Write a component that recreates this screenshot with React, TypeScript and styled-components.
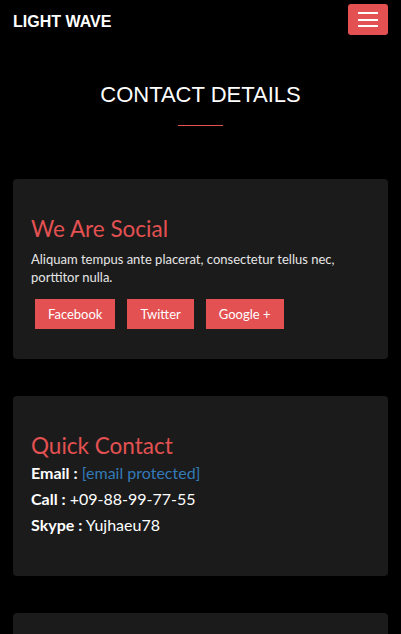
import styled, { createGlobalStyle } from 'styled-components';

const GlobalStyle = createGlobalStyle`
  html, body {
    margin: 0;
    padding: 0;
    background: #000;
  }
  body {
    font-family: Lato, 'Open Sans', sans-serif;
    color: #fff;
  }
  * {
    box-sizing: border-box;
  }
`;

const RED = '#e35152';

const NavBar = styled.header`
  height: 40px;
  padding: 4px 13px 0;
  display: flex;
  align-items: center;
  justify-content: space-between;
`;

const Brand = styled.div`
  font-family: 'Liberation Sans', Arial, sans-serif;
  font-weight: 700;
  font-size: 16px;
  color: #fff;
`;

const Toggle = styled.button`
  width: 40px;
  height: 31px;
  margin-top: -5px;
  border: none;
  border-radius: 3px;
  background: ${RED};
  display: flex;
  flex-direction: column;
  align-items: center;
  justify-content: center;
  gap: 4.5px;
  padding: 0;
`;

const Bar = styled.span`
  display: block;
  width: 20px;
  height: 2px;
  background: #fff;
`;

const SectionTitle = styled.h2`
  margin: 43px 0 0;
  text-align: center;
  font-family: 'Liberation Sans', Arial, sans-serif;
  font-weight: 400;
  font-size: 22px;
  line-height: 1.1;
  color: #fff;
`;

const Rule = styled.div`
  width: 45px;
  height: 1px;
  margin: 18px auto 0;
  background: ${RED};
`;

const Cards = styled.main`
  margin-top: 53px;
  padding: 0 13px;
  display: flex;
  flex-direction: column;
  gap: 37px;
`;

const Card = styled.section`
  background: #1b1b1b;
  border-radius: 4px;
  padding: 37px 18px 25px;
`;

const CardTitle = styled.h3<{ $gap: number }>`
  margin: 0 0 ${(p) => p.$gap}px;
  font-weight: 400;
  font-size: 22.5px;
  line-height: 25px;
  color: ${RED};
`;

const Text = styled.p`
  margin: 0 0 13px;
  font-size: 13px;
  line-height: 18px;
  color: #e6e6e6;
`;

const Socials = styled.div`
  display: flex;
  gap: 12px;
  margin: 0 4px 5px;
`;

const SocialButton = styled.a`
  display: inline-block;
  height: 30px;
  padding: 0 13px;
  line-height: 30px;
  font-size: 13px;
  background: ${RED};
  color: #fff;
  text-decoration: none;
`;

const InfoList = styled.div`
  margin-bottom: 13px;
`;

const InfoRow = styled.div`
  font-size: 16px;
  line-height: 26px;
  color: #fff;
`;

const Label = styled.b`
  font-weight: 700;
`;

const Link = styled.a`
  color: #337ab7;
  text-decoration: none;
`;

const App = () => {
  return (
    <>
      <GlobalStyle />
      <NavBar>
        <Brand>LIGHT WAVE</Brand>
        <Toggle aria-label="menu">
          <Bar />
          <Bar />
          <Bar />
        </Toggle>
      </NavBar>

      <SectionTitle>CONTACT DETAILS</SectionTitle>
      <Rule />

      <Cards>
        <Card>
          <CardTitle $gap={9}>We Are Social</CardTitle>
          <Text>
            Aliquam tempus ante placerat, consectetur tellus nec, porttitor
            nulla.
          </Text>
          <Socials>
            <SocialButton href="#">Facebook</SocialButton>
            <SocialButton href="#">Twitter</SocialButton>
            <SocialButton href="#">Google +</SocialButton>
          </Socials>
        </Card>

        <Card>
          <CardTitle $gap={2}>Quick Contact</CardTitle>
          <InfoList>
            <InfoRow>
              <Label>Email :</Label> <Link href="#">[email protected]</Link>
            </InfoRow>
            <InfoRow>
              <Label>Call :</Label> +09-88-99-77-55
            </InfoRow>
            <InfoRow>
              <Label>Skype :</Label> Yujhaeu78
            </InfoRow>
          </InfoList>
        </Card>

        <Card>
          <CardTitle $gap={9}>Our Address</CardTitle>
          <Text>
            Aliquam tempus ante placerat, consectetur tellus nec, porttitor
            nulla.
          </Text>
        </Card>
      </Cards>
    </>
  );
};

export default App;
